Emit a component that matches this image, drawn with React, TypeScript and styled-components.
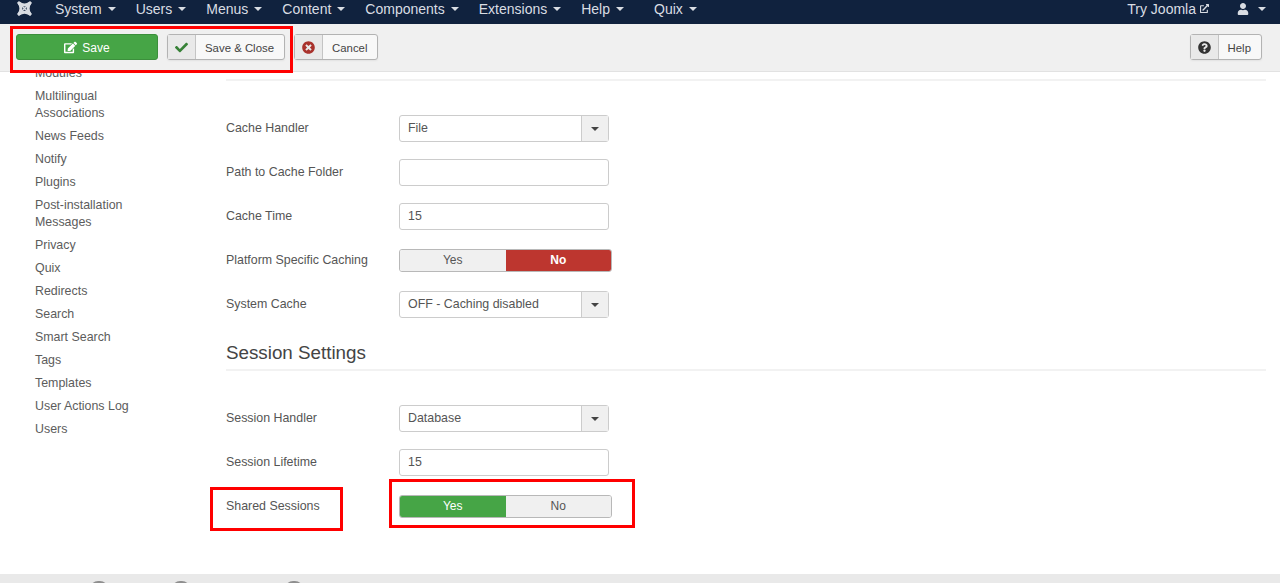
import React from "react";
import styled, { createGlobalStyle } from "styled-components";
import { FaCheck, FaEdit, FaQuestionCircle, FaTimesCircle, FaUser, FaExternalLinkAlt } from "react-icons/fa";

const GlobalStyle = createGlobalStyle`
  html, body {
    margin: 0;
    height: 100%;
    overflow: hidden;
    background: #fff;
    font-family: "Liberation Sans", Arial, sans-serif;
    font-size: 12.4px;
    color: #515151;
  }
`;

const Page = styled.div`
  position: relative;
  display: flex;
  flex-direction: column;
  height: 583px;
  overflow: hidden;
`;

const Navbar = styled.div`
  position: relative;
  z-index: 2;
  flex: 0 0 24px;
  min-height: 0;
  display: flex;
  align-items: center;
  justify-content: space-between;
  background: #10223e;
  color: #d9dde3;
  font-size: 14px;
  padding: 0 14px 7px 16px;
  box-sizing: border-box;
`;

const NavLeft = styled.div`
  display: flex;
  align-items: center;
`;

const Logo = styled.svg`
  width: 17px;
  height: 17px;
  margin-right: 22px;
`;

const NavItem = styled.div`
  display: flex;
  align-items: center;
  gap: 6px;
  margin-right: 20px;
  &:last-child { margin-left: 10px; }
`;

const NavRight = styled.div`
  display: flex;
  align-items: center;
`;

const TryLink = styled.div`
  display: flex;
  align-items: center;
  gap: 4px;
  margin-right: 28px;
  svg { font-size: 9px; }
`;

const UserIcon = styled(FaUser)`
  font-size: 12px;
  margin-right: 9px;
`;

const Caret = styled.span<{ $color?: string }>`
  display: inline-block;
  width: 0;
  height: 0;
  border-top: 4px solid ${(p) => p.$color || "#d9dde3"};
  border-left: 4px solid transparent;
  border-right: 4px solid transparent;
`;

const Toolbar = styled.div`
  position: relative;
  z-index: 2;
  flex: 0 0 48px;
  box-sizing: border-box;
  display: flex;
  align-items: center;
  background: #f0f0f0;
  border-bottom: 1px solid #e2e2e2;
  padding: 0 18px 1px 16px;
`;

const SaveButton = styled.div`
  width: 142px;
  height: 26px;
  display: flex;
  align-items: center;
  justify-content: center;
  gap: 5px;
  box-sizing: border-box;
  background: #46a546;
  border: 1px solid #3c8f3c;
  border-radius: 3px;
  color: #fff;
  font-size: 12px;
  padding-top: 1px;
  margin-right: 9px;
  svg { font-size: 13px; }
`;

const ToolButton = styled.div<{ $push?: boolean }>`
  display: flex;
  height: 26px;
  box-sizing: border-box;
  border: 1px solid #b3b3b3;
  border-radius: 3px;
  background: #f8f8f8;
  font-size: 11.4px;
  margin-right: 9px;
  margin-left: ${(p) => (p.$push ? "auto" : "0")};
  box-shadow: 0 1px 2px rgba(0, 0, 0, 0.06);
  &:last-child { margin-right: 0; }
`;

const ToolIcon = styled.span<{ $color: string }>`
  width: 27px;
  display: flex;
  align-items: center;
  justify-content: center;
  background: #e9e9e9;
  border-right: 1px solid #c4c4c4;
  color: ${(p) => p.$color};
  font-size: 13px;
`;

const ToolLabel = styled.span`
  display: flex;
  align-items: center;
  padding: 1px 10px 0 9px;
  color: #444;
`;

const Main = styled.div`
  flex: 1;
  display: flex;
  min-height: 0;
`;

const Sidebar = styled.div`
  flex: 0 0 226px;
  box-sizing: border-box;
  padding-left: 35px;
  margin-top: -7.5px;
`;

const SideItem = styled.div`
  width: 110px;
  line-height: 17px;
  margin-bottom: 6px;
  color: #5c5c5c;
`;

const Content = styled.div`
  flex: 1;
  margin-right: 14px;
`;

const TopRule = styled.div`
  height: 2px;
  background: #f2f2f2;
  margin-top: 7px;
  margin-bottom: 34px;
`;

const SectionRule = styled.div`
  height: 2px;
  background: #f2f2f2;
  margin-bottom: 34px;
`;

const FormRow = styled.div`
  display: flex;
  align-items: center;
  height: 27px;
  margin-bottom: 17px;
`;

const Label = styled.div`
  flex: 0 0 173px;
  color: #555;
  padding-bottom: 1px;
`;

const SelectBox = styled.div`
  display: flex;
  width: 210px;
  height: 27px;
  box-sizing: border-box;
  border: 1px solid #ccc;
  border-radius: 3px;
  color: #555;
`;

const SelectValue = styled.div`
  flex: 1;
  display: flex;
  align-items: center;
  padding: 0 0 1px 8px;
`;

const SelectArrow = styled.div`
  width: 26px;
  display: flex;
  align-items: center;
  justify-content: center;
  background: #f0f0f0;
  border-left: 1px solid #ccc;
`;

const TextInput = styled.div`
  width: 210px;
  height: 27px;
  box-sizing: border-box;
  border: 1px solid #ccc;
  border-radius: 3px;
  display: flex;
  align-items: center;
  padding: 0 0 1px 8px;
  color: #555;
`;

const Toggle = styled.div`
  display: flex;
  width: 213px;
  height: 23px;
  margin-top: -1px;
  box-sizing: border-box;
  border: 1px solid #b8b8b8;
  border-radius: 3px;
  overflow: hidden;
  font-size: 12px;
`;

const ToggleOption = styled.div<{ $active?: string }>`
  flex: 1;
  display: flex;
  align-items: center;
  justify-content: center;
  background: ${(p) => p.$active || "#f0f0f0"};
  color: ${(p) => (p.$active ? "#fff" : "#555")};
  font-weight: ${(p) => (p.$active === "#bd362f" ? 700 : 400)};
`;

const Heading = styled.h3`
  margin: 0;
  font-weight: 400;
  font-size: 18.8px;
  line-height: 20px;
  color: #444;
  padding-top: 8px;
  padding-bottom: 6px;
`;

const Footer = styled.div`
  flex: 0 0 9px;
  display: flex;
  overflow: hidden;
  background: #e9e9e9;
  padding: 7px 0 0 90px;
  box-sizing: border-box;
`;

const FooterDot = styled.span<{ $gap: number }>`
  flex: 0 0 18px;
  height: 18px;
  border-radius: 8px 8px 0 0;
  background: #8f8f8f;
  margin-right: ${(p) => p.$gap}px;
`;

const Mark = styled.div<{ $x: number; $y: number; $w: number; $h: number }>`
  position: absolute;
  left: ${(p) => p.$x}px;
  top: ${(p) => p.$y}px;
  width: ${(p) => p.$w}px;
  height: ${(p) => p.$h}px;
  box-sizing: border-box;
  border: 3px solid #f00;
  z-index: 3;
`;

const menus = ["System", "Users", "Menus", "Content", "Components", "Extensions", "Help", "Quix"];
const sideItems = [
  "Modules", "Multilingual Associations", "News Feeds", "Notify", "Plugins",
  "Post-installation Messages", "Privacy", "Quix", "Redirects", "Search",
  "Smart Search", "Tags", "Templates", "User Actions Log", "Users",
];

const Select = ({ label, value }: { label: string; value: string }) => (
  <FormRow>
    <Label>{label}</Label>
    <SelectBox>
      <SelectValue>{value}</SelectValue>
      <SelectArrow><Caret $color="#444" /></SelectArrow>
    </SelectBox>
  </FormRow>
);

const Input = ({ label, value }: { label: string; value?: string }) => (
  <FormRow>
    <Label>{label}</Label>
    <TextInput>{value}</TextInput>
  </FormRow>
);

export default function App() {
  return (
    <Page>
      <GlobalStyle />
      <Navbar>
        <NavLeft>
          <Logo viewBox="0 0 17 17" fill="none" stroke="#d9dde3" strokeWidth="3" strokeLinecap="round">
            <path d="M3 3 C6 5.5 11 5.5 14 3" />
            <path d="M3 14 C6 11.5 11 11.5 14 14" />
            <path d="M3 3 C5.5 6 5.5 11 3 14" />
            <path d="M14 3 C11.5 6 11.5 11 14 14" />
            <path d="M5 5 L12 12 M12 5 L5 12" strokeWidth="1.6" />
          </Logo>
          {menus.map((m) => (
            <NavItem key={m}>{m} <Caret /></NavItem>
          ))}
        </NavLeft>
        <NavRight>
          <TryLink>Try Joomla <FaExternalLinkAlt /></TryLink>
          <UserIcon />
          <Caret />
        </NavRight>
      </Navbar>
      <Toolbar>
        <SaveButton><FaEdit /> Save</SaveButton>
        <ToolButton>
          <ToolIcon $color="#378137"><FaCheck /></ToolIcon>
          <ToolLabel>Save &amp; Close</ToolLabel>
        </ToolButton>
        <ToolButton>
          <ToolIcon $color="#a9322c"><FaTimesCircle /></ToolIcon>
          <ToolLabel>Cancel</ToolLabel>
        </ToolButton>
        <ToolButton $push>
          <ToolIcon $color="#333"><FaQuestionCircle /></ToolIcon>
          <ToolLabel>Help</ToolLabel>
        </ToolButton>
      </Toolbar>
      <Main>
        <Sidebar>
          {sideItems.map((s) => <SideItem key={s}>{s}</SideItem>)}
        </Sidebar>
        <Content>
          <TopRule />
          <Select label="Cache Handler" value="File" />
          <Input label="Path to Cache Folder" />
          <Input label="Cache Time" value="15" />
          <FormRow>
            <Label>Platform Specific Caching</Label>
            <Toggle>
              <ToggleOption>Yes</ToggleOption>
              <ToggleOption $active="#bd362f">No</ToggleOption>
            </Toggle>
          </FormRow>
          <Select label="System Cache" value="OFF - Caching disabled" />
          <Heading>Session Settings</Heading>
          <SectionRule />
          <Select label="Session Handler" value="Database" />
          <Input label="Session Lifetime" value="15" />
          <FormRow>
            <Label>Shared Sessions</Label>
            <Toggle>
              <ToggleOption $active="#46a546">Yes</ToggleOption>
              <ToggleOption>No</ToggleOption>
            </Toggle>
          </FormRow>
        </Content>
      </Main>
      <Footer>
        <FooterDot $gap={64} />
        <FooterDot $gap={95} />
        <FooterDot $gap={0} />
      </Footer>
      <Mark $x={10} $y={26} $w={283} $h={47} />
      <Mark $x={210} $y={487} $w={133} $h={44} />
      <Mark $x={389} $y={479} $w={246} $h={49} />
    </Page>
  );
}
